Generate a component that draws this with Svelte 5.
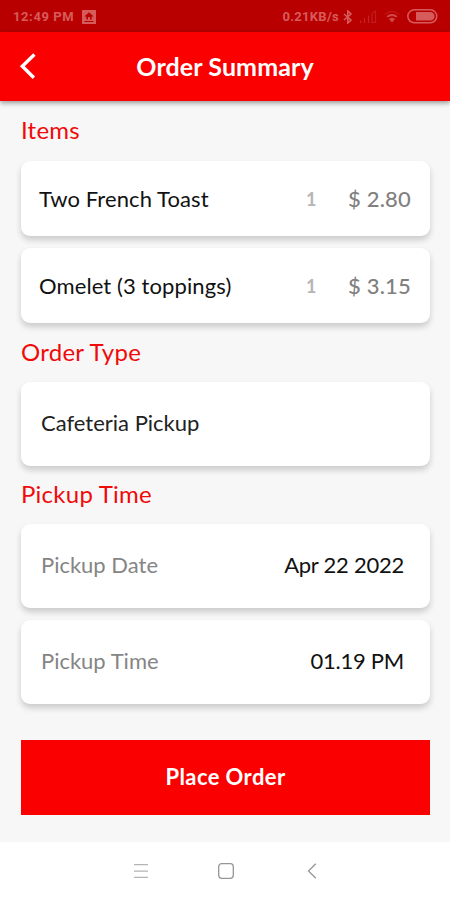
<script lang="ts">
	type Item = { name: string; qty: number; price: number };

	const items: Item[] = [
		{ name: 'Two French Toast', qty: 1, price: 2.8 },
		{ name: 'Omelet (3 toppings)', qty: 1, price: 3.15 }
	];

	const pickup = [
		{ label: 'Pickup Date', value: 'Apr 22 2022' },
		{ label: 'Pickup Time', value: '01.19 PM' }
	];
</script>

<div class="screen">
	<div class="status">
		<span class="status__time">12:49 PM</span>
		<svg class="status__app" width="14" height="14" viewBox="0 0 14 14" aria-hidden="true">
			<path
				fill="currentColor"
				fill-rule="evenodd"
				d="M0 0h14v14H0zM7 2.2 2.3 6.5h2v3h5.4v-3h2zM6 7h2v2.5H6zM2.5 11v1h9v-1z"
			/>
		</svg>
		<span class="status__speed">0.21KB/s</span>
		<svg class="status__bt" width="10" height="14" viewBox="0 0 10 14" fill="none" stroke="currentColor" stroke-width="1.6" aria-hidden="true">
			<path d="M1 4l7 6-3.2 3V1L8 4l-7 6" />
		</svg>
		<svg class="status__signal" width="18" height="14" viewBox="0 0 18 14" fill="none" stroke="currentColor" stroke-width="1.2" aria-hidden="true">
			<path d="M1.5 10.5v2.5M5.5 8v5M9.5 5.5v7.5" />
			<path d="M13 12.4V3.5L16.5 1v11.4z" opacity=".75" />
		</svg>
		<svg class="status__wifi" width="16" height="13" viewBox="0 0 16 13" fill="none" stroke="currentColor" aria-hidden="true">
			<path d="M.8 4.5a10.5 10.5 0 0 1 14.4 0" opacity=".45" />
			<path stroke-width="1.8" d="M3.2 6.9a7 7 0 0 1 9.6 0" />
			<path fill="currentColor" stroke="none" d="M5 9a4.5 4.5 0 0 1 6 0l-3 3.5z" />
		</svg>
		<svg class="status__battery" width="31" height="15" viewBox="0 0 31 15" aria-hidden="true">
			<rect x=".8" y=".8" width="29" height="13" rx="6.5" fill="none" stroke="currentColor" stroke-width="1.5" />
			<path fill="currentColor" d="M9 3h14.3a4.3 4.3 0 0 1 0 8.6H9z" />
		</svg>
	</div>

	<header class="appbar">
		<button class="appbar__back" aria-label="Back">
			<svg width="18" height="28" viewBox="0 0 18 28" fill="none" stroke="currentColor" stroke-width="3.4">
				<path d="M15.4 2.5 3.3 14.2l11.6 11.6" />
			</svg>
		</button>
		<h1>Order Summary</h1>
	</header>

	<main>
		<h2>Items</h2>
		<div class="stack">
			{#each items as item}
				<div class="card card--item">
					<span class="name">{item.name}</span>
					<span class="qty">{item.qty}</span>
					<span class="price">$ {item.price.toFixed(2)}</span>
				</div>
			{/each}
		</div>

		<h2 class="type-title">Order Type</h2>
		<div class="card">
			<span class="type">Cafeteria Pickup</span>
		</div>

		<h2 class="time-title">Pickup Time</h2>
		<div class="stack">
			{#each pickup as row}
				<div class="card">
					<span class="label">{row.label}</span>
					<span class="value">{row.value}</span>
				</div>
			{/each}
		</div>

		<button class="submit">Place Order</button>
	</main>

	<nav>
		<svg width="16" height="16" viewBox="0 0 16 16" stroke="#b4b4b4" stroke-width="1.3" aria-hidden="true">
			<path d="M1 1.7h14M1 8.2h14M1 14.4h14" />
		</svg>
		<svg class="home" width="18" height="18" viewBox="0 0 18 18" fill="none" stroke="#969696" stroke-width="1.3" aria-hidden="true">
			<rect x="1.7" y="1.7" width="14.6" height="14.6" rx="3" />
		</svg>
		<svg width="10" height="16" viewBox="0 0 10 16" fill="none" stroke="#969696" stroke-width="1.3" aria-hidden="true">
			<path d="M8.8.8 1.5 8l7.3 7.2" />
		</svg>
	</nav>
</div>

<style>
	:global(body) {
		margin: 0;
	}

	.screen {
		display: flex;
		flex-direction: column;
		width: 450px;
		height: 900px;
		overflow: hidden;
		background: #f7f7f7;
		font-family: Lato, 'Liberation Sans', sans-serif;
		color: #111;
	}

	.status {
		display: flex;
		align-items: center;
		box-sizing: border-box;
		flex: none;
		height: 32px;
		padding: 1px 12px 0 13px;
		background: #b90000;
		color: #d65c5c;
		font: 700 13px Roboto, sans-serif;
	}
	.status__time {
		letter-spacing: 0.6px;
	}
	.status__app {
		margin-left: 8px;
	}
	.status__speed {
		margin-left: auto;
		letter-spacing: 0.3px;
	}
	.status__bt {
		margin-left: 4px;
	}
	.status__signal {
		margin-left: 6px;
		opacity: 0.4;
	}
	.status__wifi {
		margin-left: 7px;
		opacity: 0.8;
	}
	.status__battery {
		margin-left: 7px;
	}

	.appbar {
		display: grid;
		grid-template-columns: 60px 1fr 60px;
		align-items: center;
		box-sizing: border-box;
		flex: none;
		height: 69px;
		padding-bottom: 1px;
		background: #fb0000;
		color: #fff;
		box-shadow: 0 2px 5px rgba(0, 0, 0, 0.4);
	}
	.appbar__back {
		display: flex;
		padding: 0 0 0 19px;
		border: 0;
		background: none;
		color: inherit;
	}
	h1 {
		margin: 0;
		padding-bottom: 1px;
		text-align: center;
		font-size: 25px;
		font-weight: 700;
		letter-spacing: 0.1px;
		white-space: nowrap;
	}

	main {
		display: flex;
		flex-direction: column;
		flex: 1;
		padding: 0 20px 0 21px;
	}
	h2 {
		flex: none;
		height: 60px;
		margin: 0;
		font-size: 24px;
		font-weight: 400;
		line-height: 58px;
		letter-spacing: 0.25px;
		color: #f00b0b;
	}
	.type-title {
		height: 59px;
		line-height: 57px;
	}
	.time-title {
		height: 58px;
		line-height: 56px;
	}

	.stack {
		display: flex;
		flex-direction: column;
		gap: 12px;
	}
	.card {
		display: flex;
		align-items: center;
		justify-content: space-between;
		box-sizing: border-box;
		height: 84px;
		padding: 0 26px 4px 20px;
		border-radius: 9px;
		background: #fff;
		box-shadow: 0 4px 6px rgba(0, 0, 0, 0.18);
		font-size: 22px;
		white-space: nowrap;
	}
	.card--item {
		display: grid;
		grid-template-columns: 1fr 10px 95px;
		height: 75px;
		padding: 0 19px 0 18px;
	}
	.name {
		letter-spacing: 0.1px;
	}
	.type {
		color: #222;
	}
	.label {
		color: #858585;
	}
	.value {
		letter-spacing: -0.25px;
	}
	.qty {
		font-size: 18px;
		font-weight: 700;
		color: #b5b5b5;
	}
	.price {
		text-align: right;
		font-weight: 500;
		letter-spacing: 0.2px;
		color: #808080;
	}

	.submit {
		height: 75px;
		margin-top: 36px;
		padding: 0 0 3px;
		border: 0;
		background: #fb0000;
		color: #fff;
		font: 700 22px Lato, sans-serif;
		letter-spacing: 0.4px;
	}

	nav {
		display: flex;
		justify-content: center;
		align-items: center;
		flex: none;
		height: 58px;
		background: #fff;
	}
	.home {
		margin: 0 72px 0 68px;
	}
</style>
